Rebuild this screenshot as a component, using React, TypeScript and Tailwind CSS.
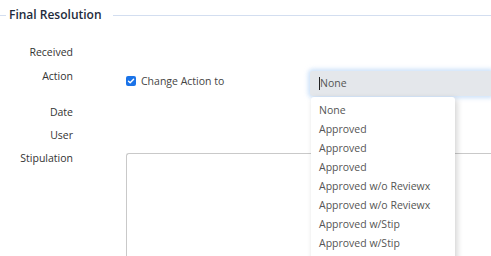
import React from "react";

const items = [
  "None",
  "Approved",
  "Approved",
  "Approved",
  "Approved w/o Reviewx",
  "Approved w/o Reviewx",
  "Approved w/Stip",
  "Approved w/Stip",
];

export default function App() {
  return (
    <div
      className="relative w-[491px] h-[256px] overflow-hidden bg-white text-[#333]"
      style={{ fontFamily: '"Open Sans", "Noto Sans", sans-serif' }}
    >
      {/* legend */}
      <div className="flex items-center h-[30px]">
        <div className="w-[6px] h-px bg-[#d3def0]" />
        <div className="px-[3px] text-[12px] font-semibold text-[#1e2b3c]">
          Final Resolution
        </div>
        <div className="flex-1 h-px bg-[#d3def0] ml-[8px]" />
      </div>

      {/* Received */}
      <div className="flex mt-[14px] h-[16px] items-center">
        <div className="w-[73px] text-right text-[10.5px] leading-[16px]">Received</div>
      </div>

      {/* Action */}
      <div className="flex mt-[8px] h-[28px]">
        <div className="w-[73px] text-right text-[10.5px] leading-[16px]">Action</div>
        <div className="ml-[53px] w-[184px] flex items-center h-[16px] mt-[5px] gap-[5px]">
          <div className="w-[10px] h-[10px] rounded-[2px] bg-[#1a73e8] flex items-center justify-center">
            <svg width="8" height="8" viewBox="0 0 8 8">
              <path d="M1.5 4.2 L3.2 5.8 L6.6 2.2" stroke="white" strokeWidth="1.4" fill="none" strokeLinecap="round" strokeLinejoin="round" />
            </svg>
          </div>
          <span className="text-[10.5px] text-[#444] leading-[16px]">Change Action to</span>
        </div>
        <div className="flex-1 mt-[3px] h-[25px] bg-[#e4e7eb] rounded-l-[3px] shadow-[0_0_4px_2px_rgba(170,205,245,0.6)] flex items-center pl-[9px]">
          <span className="w-px h-[13px] bg-[#222]" />
          <span className="text-[10.5px] text-[#555]">None</span>
        </div>
      </div>

      {/* Date */}
      <div className="flex mt-[8px] h-[16px] items-center">
        <div className="w-[73px] text-right text-[10.5px] leading-[16px]">Date</div>
      </div>

      {/* User */}
      <div className="flex mt-[7px] h-[16px] items-center">
        <div className="w-[73px] text-right text-[10.5px] leading-[16px]">User</div>
      </div>

      {/* Stipulation */}
      <div className="flex mt-[7px]">
        <div className="w-[73px] text-right text-[10.5px] leading-[16px]">Stipulation</div>
        <div className="ml-[53px] flex-1 mt-[3px] h-[120px] border border-[#c9c9c9] border-r-0 rounded-tl-[3px]" />
      </div>

      {/* dropdown menu */}
      <div className="absolute left-[311px] top-[97px] w-[144px] h-[170px] bg-white rounded-[3px] shadow-[2px_2px_6px_rgba(0,0,0,0.18)] pt-[4px]">
        {items.map((t, i) => (
          <div key={i} className="h-[19px] flex items-center pl-[8px] text-[10.5px] text-[#555]">
            {t}
          </div>
        ))}
      </div>
    </div>
  );
}
